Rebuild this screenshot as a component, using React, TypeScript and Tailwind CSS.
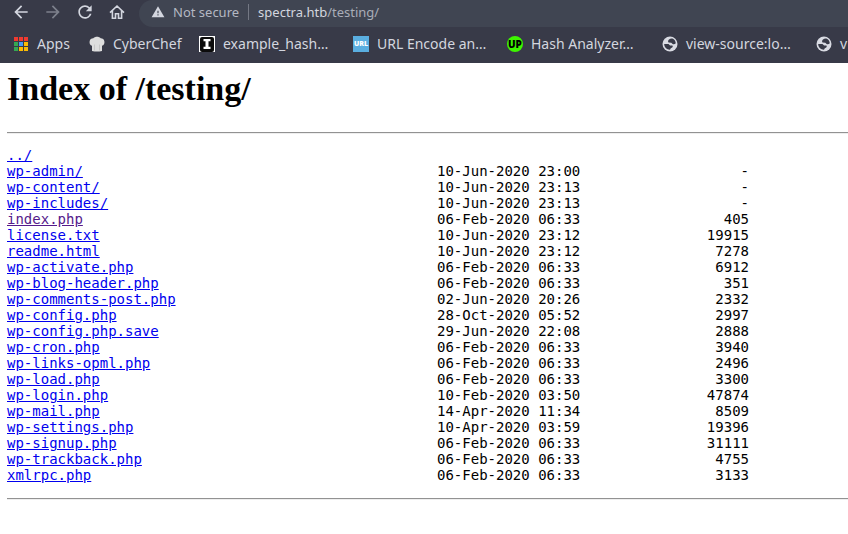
import type { ReactNode } from "react";
import { MdArrowBack, MdArrowForward, MdRefresh, MdWarning } from "react-icons/md";

type Entry = { name: string; date?: string; size?: string; visited?: boolean };

const entries: Entry[] = [
  { name: "../" },
  { name: "wp-admin/", date: "10-Jun-2020 23:00", size: "-" },
  { name: "wp-content/", date: "10-Jun-2020 23:13", size: "-" },
  { name: "wp-includes/", date: "10-Jun-2020 23:13", size: "-" },
  { name: "index.php", date: "06-Feb-2020 06:33", size: "405", visited: true },
  { name: "license.txt", date: "10-Jun-2020 23:12", size: "19915" },
  { name: "readme.html", date: "10-Jun-2020 23:12", size: "7278" },
  { name: "wp-activate.php", date: "06-Feb-2020 06:33", size: "6912" },
  { name: "wp-blog-header.php", date: "06-Feb-2020 06:33", size: "351" },
  { name: "wp-comments-post.php", date: "02-Jun-2020 20:26", size: "2332" },
  { name: "wp-config.php", date: "28-Oct-2020 05:52", size: "2997" },
  { name: "wp-config.php.save", date: "29-Jun-2020 22:08", size: "2888" },
  { name: "wp-cron.php", date: "06-Feb-2020 06:33", size: "3940" },
  { name: "wp-links-opml.php", date: "06-Feb-2020 06:33", size: "2496" },
  { name: "wp-load.php", date: "06-Feb-2020 06:33", size: "3300" },
  { name: "wp-login.php", date: "10-Feb-2020 03:50", size: "47874" },
  { name: "wp-mail.php", date: "14-Apr-2020 11:34", size: "8509" },
  { name: "wp-settings.php", date: "10-Apr-2020 03:59", size: "19396" },
  { name: "wp-signup.php", date: "06-Feb-2020 06:33", size: "31111" },
  { name: "wp-trackback.php", date: "06-Feb-2020 06:33", size: "4755" },
  { name: "xmlrpc.php", date: "06-Feb-2020 06:33", size: "3133" },
];

function HomeIcon() {
  return (
    <svg viewBox="0 0 20 20" className="size-5" fill="none" stroke="currentColor" strokeWidth="1.6">
      <path d="M3 10.6 10 4l7 6.6M5.4 8.8v7.4h3.1v-4.4h3v4.4h3.1V8.8" />
    </svg>
  );
}

function AppsIcon() {
  const colors = ["#f03a30", "#f03a30", "#f03a30", "#34a853", "#4a9cf5", "#fbbc04", "#34a853", "#fbbc04", "#fbbc04"];
  return (
    <svg viewBox="0 0 16 16" className="size-4">
      {colors.map((c, i) => (
        <rect key={i} x={1 + (i % 3) * 5} y={1 + Math.floor(i / 3) * 5} width="4" height="4" fill={c} />
      ))}
    </svg>
  );
}

function ChefIcon() {
  return (
    <svg viewBox="0 0 16 16" className="size-4">
      <path d="M3 9.800C1.200 9 .3 7.400.6 5.400.9 3.500 2.400 2.300 4.300 2.300 5.200 1.300 6.600.8 8 .8s2.800.5 3.700 1.500c1.900 0 3.400 1.200 3.700 3.100.3 2-.6 3.600-2.400 4.400V15c-3.300.7-6.700.7-10 0z" fill="#dedede" />
      <path d="M5.500 8.500v6M10.500 8.500v6" stroke="#c2c2c2" strokeWidth=".8" />
    </svg>
  );
}

function HashIcon() {
  return (
    <svg viewBox="0 0 16 16" className="size-4">
      <path d="M0 0h16v16H0z" fill="#fff" />
      <rect x="1" y="1" width="14" height="15" rx="2" fill="#0c0c0c" />
      <path d="M4.500 3h7v2.200H9.500v5.600h2V13h-7v-2.200h2V5.200h-2z" fill="#fff" />
    </svg>
  );
}

function UrlIcon() {
  return (
    <span className="flex size-4 items-center justify-center bg-[#5aaee0] font-['Open_Sans',sans-serif] text-[7px] font-extrabold text-white">
      URL
    </span>
  );
}

function UpIcon() {
  return (
    <span className="flex size-4 items-center justify-center rounded-full bg-[#3df500] font-['Open_Sans',sans-serif] text-[10px] font-extrabold text-black">
      UP
    </span>
  );
}

function GlobeIcon() {
  return (
    <svg viewBox="0 0 16 16" className="size-4">
      <circle cx="8" cy="8" r="7.500" fill="#d9dbe3" />
      <path d="M7 3.600c1-1 2.300-1.400 3.400-1.100 2 .8 3.200 2.600 3.400 4.700-.8 1.100-2 1.400-3.200.9L9.300 6.800 6.500 6.500C5.800 5.600 6 4.400 7 3.600z" fill="#383a48" />
      <path d="M2.200 8h4.300l1.600 1.500h2.300c.6.7.4 1.500-.2 2l-1.400.8-.8 1.400c-3.100.1-5.800-2.400-5.800-5.700z" fill="#383a48" />
    </svg>
  );
}

type Bookmark = { label: string; icon: ReactNode; width: string };

const bookmarks: Bookmark[] = [
  { label: "Apps", icon: <AppsIcon />, width: "w-[76px]" },
  { label: "CyberChef", icon: <ChefIcon />, width: "w-[110px]" },
  { label: "example_hash…", icon: <HashIcon />, width: "w-[154px]" },
  { label: "URL Encode an…", icon: <UrlIcon />, width: "w-[154px]" },
  { label: "Hash Analyzer…", icon: <UpIcon />, width: "w-[155px]" },
  { label: "view-source:lo…", icon: <GlobeIcon />, width: "w-[154px]" },
  { label: "v", icon: <GlobeIcon />, width: "w-[154px]" },
];

function BrowserChrome() {
  return (
    <header className="overflow-hidden bg-[#383a48] font-['Noto_Sans',sans-serif] text-[#d3d6df]">
      <div className="flex h-[27px] items-center pl-[11px]">
        <nav className="flex shrink-0 gap-3 pb-[3px]" aria-label="Navigation">
          <button type="button" aria-label="Back"><MdArrowBack className="size-5" /></button>
          <button type="button" aria-label="Forward" className="text-[#7d808c]"><MdArrowForward className="size-5" /></button>
          <button type="button" aria-label="Reload"><MdRefresh className="size-5" /></button>
          <button type="button" aria-label="Home"><HomeIcon /></button>
        </nav>
        <div className="ml-3 flex h-full min-w-0 flex-1 items-center rounded-l-full bg-[#404552] pb-[3px] pl-3 text-[13px] leading-5">
          <MdWarning className="size-[14px] shrink-0" />
          <span className="ml-2 whitespace-nowrap text-[#b4b8c2]">Not secure</span>
          <span className="mx-[9px] h-4 w-px bg-[#747884]" />
          <span className="whitespace-nowrap text-[#a9adb8]">
            <span className="text-[#d3d6df]">spectra.htb</span>/testing/
          </span>
        </div>
      </div>
      <nav className="flex h-9 items-center pb-[2px] pl-[13px] text-sm" aria-label="Bookmarks">
        {bookmarks.map((b) => (
          <a key={b.label} href="#" className={"flex shrink-0 items-center gap-2 whitespace-nowrap " + b.width}>
            {b.icon}
            {b.label}
          </a>
        ))}
      </nav>
    </header>
  );
}

export default function App() {
  return (
    <div className="min-h-screen overflow-hidden bg-white text-black">
      <BrowserChrome />
      <main className="pl-[7px]">
        <h1 className="pt-[7px] font-['Liberation_Serif',serif] text-[34px] leading-[38px] font-bold">Index of /testing/</h1>
        <hr className="mt-6 border-t border-b border-t-[#929292] border-b-[#eeeeee]" />
        <table className="mt-[13px] mb-[15px] w-[742px] table-fixed font-['DejaVu_Sans_Mono',monospace] text-[14px] leading-4">
          <colgroup>
            <col className="w-[430px]" />
            <col className="w-[160px]" />
            <col />
          </colgroup>
          <tbody>
            {entries.map((e) => (
              <tr key={e.name}>
                <td className="p-0">
                  <a href="#" className={e.visited ? "text-[#551a8b] underline" : "text-[#0000ee] underline"}>{e.name}</a>
                </td>
                <td className="p-0">{e.date}</td>
                <td className="p-0 text-right">{e.size}</td>
              </tr>
            ))}
          </tbody>
        </table>
        <hr className="border-t border-b border-t-[#929292] border-b-[#eeeeee]" />
      </main>
    </div>
  );
}
